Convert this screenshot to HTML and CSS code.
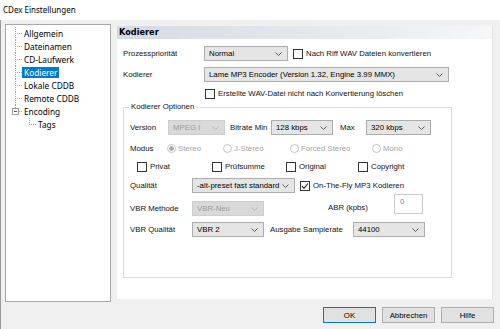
FILE: index.html
```html
<!DOCTYPE html>
<html lang="de">
<head>
  <meta charset="UTF-8" />
  <title>CDex Einstellungen</title>
  <link rel="stylesheet" href="styles.css">
</head>
<body>

<div class="titlebar">CDex Einstellungen</div>

<div class="dialog">
  <div class="main">

    <div class="tree">
      <ul>
        <li><div class="row"><span class="branch"></span><span class="node">Allgemein</span></div></li>
        <li><div class="row"><span class="branch"></span><span class="node">Dateinamen</span></div></li>
        <li><div class="row"><span class="branch"></span><span class="node">CD-Laufwerk</span></div></li>
        <li><div class="row"><span class="branch"></span><span class="node selected">Kodierer</span></div></li>
        <li><div class="row"><span class="branch"></span><span class="node">Lokale CDDB</span></div></li>
        <li><div class="row"><span class="branch"></span><span class="node">Remote CDDB</span></div></li>
        <li class="last">
          <div class="row"><span class="branch"><span class="toggle"></span></span><span class="node">Encoding</span></div>
          <ul class="sub">
            <li class="last"><div class="row"><span class="branch"></span><span class="node">Tags</span></div></li>
          </ul>
        </li>
      </ul>
    </div>

    <div class="page">
      <div class="page-head">Kodierer</div>
      <div class="page-body">

        <div class="line line-prio">
          <span class="lbl lbl-main">Prozesspriorität</span>
          <div class="combo c-prio"><span>Normal</span><svg class="arr" width="7" height="4" viewBox="0 0 7 4"><path d="M0.5 0.5 3.5 3.5 6.5 0.5" /></svg></div>
          <label class="check ml5"><span class="box"></span>Nach Riff WAV Dateien konvertieren</label>
        </div>

        <div class="line line-enc">
          <span class="lbl lbl-main">Kodierer</span>
          <div class="combo c-enc"><span>Lame MP3 Encoder (Version 1.32, Engine 3.99 MMX)</span><svg class="arr" width="7" height="4" viewBox="0 0 7 4"><path d="M0.5 0.5 3.5 3.5 6.5 0.5" /></svg></div>
        </div>

        <div class="line line-keep">
          <label class="check"><span class="box"></span>Erstellte WAV-Datei nicht nach Konvertierung löschen</label>
        </div>

        <fieldset class="group">
          <legend>Kodierer Optionen</legend>

          <div class="line line-version">
            <span class="lbl lbl-version">Version</span>
            <div class="combo disabled c-version"><span>MPEG I</span><svg class="arr" width="7" height="4" viewBox="0 0 7 4"><path d="M0.5 0.5 3.5 3.5 6.5 0.5" /></svg></div>
            <span class="lbl lbl-min">Bitrate Min</span>
            <div class="combo c-min"><span>128 kbps</span><svg class="arr" width="7" height="4" viewBox="0 0 7 4"><path d="M0.5 0.5 3.5 3.5 6.5 0.5" /></svg></div>
            <span class="lbl lbl-max">Max</span>
            <div class="combo c-max"><span>320 kbps</span><svg class="arr" width="7" height="4" viewBox="0 0 7 4"><path d="M0.5 0.5 3.5 3.5 6.5 0.5" /></svg></div>
          </div>

          <div class="line line-mode">
            <span class="lbl lbl-mode">Modus</span>
            <label class="radio r-stereo"><span class="dot checked"></span>Stereo</label>
            <label class="radio r-joint"><span class="dot"></span>J-Stereo</label>
            <label class="radio r-forced"><span class="dot"></span>Forced Stereo</label>
            <label class="radio"><span class="dot"></span>Mono</label>
          </div>

          <div class="line line-flags">
            <label class="check f-privat"><span class="box"></span>Privat</label>
            <label class="check f-crc"><span class="box"></span>Prüfsumme</label>
            <label class="check f-orig"><span class="box"></span>Original</label>
            <label class="check"><span class="box"></span>Copyright</label>
          </div>

          <div class="line line-quality">
            <span class="lbl lbl-opt">Qualität</span>
            <div class="combo c-quality"><span>-alt-preset fast standard</span><svg class="arr" width="7" height="4" viewBox="0 0 7 4"><path d="M0.5 0.5 3.5 3.5 6.5 0.5" /></svg></div>
            <label class="check ml5"><span class="box"><svg width="8" height="8" viewBox="0 0 8 8"><path d="M1 4.2 3 6.3 7 1.5" /></svg></span>On-The-Fly MP3 Kodieren</label>
          </div>

          <div class="line line-vbr">
            <span class="lbl lbl-opt down">VBR Methode</span>
            <div class="combo disabled c-vbr down"><span>VBR-Neu</span><svg class="arr" width="7" height="4" viewBox="0 0 7 4"><path d="M0.5 0.5 3.5 3.5 6.5 0.5" /></svg></div>
            <span class="lbl lbl-abr">ABR (kpbs)</span>
            <div class="edit">0</div>
          </div>

          <div class="line line-vbrq">
            <span class="lbl lbl-opt">VBR Qualität</span>
            <div class="combo c-vbr"><span>VBR 2</span><svg class="arr" width="7" height="4" viewBox="0 0 7 4"><path d="M0.5 0.5 3.5 3.5 6.5 0.5" /></svg></div>
            <span class="lbl lbl-rate">Ausgabe Samplerate</span>
            <div class="combo c-vbr"><span>44100</span><svg class="arr" width="7" height="4" viewBox="0 0 7 4"><path d="M0.5 0.5 3.5 3.5 6.5 0.5" /></svg></div>
          </div>
        </fieldset>

      </div>
    </div>

  </div>

  <div class="buttons">
    <button class="btn default">OK</button>
    <button class="btn">Abbrechen</button>
    <button class="btn">Hilfe</button>
  </div>
</div>

</body>
</html>
```

FILE: styles.css
```css
* {
  box-sizing: border-box;
}

body {
  margin: 0;
  width: 500px;
  height: 329px;
  overflow: hidden;
  background-color: #f0f0f0;
  font-family: "Liberation Sans", Arial, sans-serif;
  font-size: 7.8px;
  color: #111;
}

.titlebar {
  height: 20px;
  padding-left: 3px;
  background: white;
  font-family: "Noto Sans", sans-serif;
  font-size: 8px;
  line-height: 20px;
  color: #000;
}

.dialog {
  height: 309px;
  border-left: 1px solid #9a9a9a;
  padding: 4px 6px 0 4px;
}

.main {
  display: flex;
  gap: 6px;
  height: 278px;
}

/* tree */

.tree {
  width: 106px;
  height: 278px;
  flex: none;
  background: white;
  border: 1px solid #a9a9a9;
  padding-top: 2px;
  font-family: "Noto Sans", sans-serif;
  font-size: 8.3px;
  color: #000;
}

.tree ul {
  list-style: none;
  margin: 0;
  padding: 0 0 0 9px;
}

.tree ul.sub {
  padding-left: 14px;
}

.tree .row {
  display: flex;
  align-items: center;
  height: 13px;
}

.branch {
  display: flex;
  align-items: center;
  width: 7px;
  height: 13px;
  flex: none;
  background:
    repeating-linear-gradient(to bottom, #a0a0a0 0 1px, transparent 1px 2px) 0 0 / 1px 100% no-repeat,
    repeating-linear-gradient(to right, #a0a0a0 0 1px, transparent 1px 2px) 0 6px / 100% 1px no-repeat;
}

.last > .row .branch {
  background-size: 1px 7px, 100% 1px;
}

.toggle {
  width: 7px;
  height: 7px;
  margin-left: -3px;
  margin-top: -1px;
  border: 1px solid #9a9a9a;
  background: linear-gradient(#555, #555) center / 3px 1px no-repeat, white;
}

.node {
  padding: 0 2px;
  line-height: 11px;
  white-space: nowrap;
}

.node.selected {
  background-color: #0078d7;
  color: white;
}

/* page */

.page {
  width: 376px;
  height: 273px;
  margin-top: 2px;
  flex: none;
  background: white;
  border-right: 1px solid #e2e2e2;
}

.page-head {
  height: 13px;
  padding-left: 2px;
  background: linear-gradient(to right, #d3dbe4, #e9edf1 70%, #f6f7f9);
  font-family: "DejaVu Sans", sans-serif;
  font-weight: bold;
  font-size: 8.2px;
  line-height: 13px;
  color: #000;
}

.page-body {
  padding-left: 6px;
}

.line {
  display: flex;
  align-items: center;
  height: 15px;
  white-space: nowrap;
}

.line-prio { margin-top: 7px; }
.line-enc { margin-top: 6px; }
.line-keep { margin-top: 5px; padding-left: 82px; height: 13px; }
.line-version { margin-top: 8px; }
.line-mode { margin-top: 6px; }
.line-flags { margin-top: 3px; padding-left: 7px; }
.line-quality { margin-top: 4px; }
.line-vbr { margin-top: 1px; height: 22px; align-items: flex-start; }
.line-vbrq { margin-top: 6px; }

.lbl {
  flex: none;
  line-height: 15px;
}

.lbl-main { width: 81px; }
.lbl-version { width: 38px; }
.lbl-min { width: 41px; margin-left: 5px; }
.lbl-max { width: 26px; margin-left: 7px; }
.lbl-mode { width: 37px; }
.lbl-opt { width: 62px; }
.lbl-abr { width: 66px; margin-left: 64px; margin-top: 6px; }
.lbl-rate { width: 83px; margin-left: 6px; }

.down { margin-top: 7px; }
.ml5 { margin-left: 5px; }

/* combo boxes */

.combo {
  display: flex;
  align-items: center;
  justify-content: space-between;
  height: 15px;
  flex: none;
  padding: 0 5px 0 4px;
  border: 1px solid #adadad;
  background-color: #e5e5e5;
  color: #000;
}

.combo .arr path {
  fill: none;
  stroke: #5a5a5a;
  stroke-width: 1;
}

.combo.disabled {
  background-color: #d9d9d9;
  border-color: #cdcdcd;
  color: #9d9d9d;
}

.combo.disabled .arr path {
  stroke: #b5b5b5;
}

.c-prio { width: 84px; }
.c-enc { width: 245px; }
.c-version { width: 57px; }
.c-min { width: 62px; }
.c-max { width: 65px; }
.c-quality { width: 103px; }
.c-vbr { width: 72px; }

.edit {
  width: 29px;
  height: 20px;
  flex: none;
  padding: 2px 0 0 5px;
  border: 1px solid #c9c9c9;
  background: white;
  color: #8a8a8a;
}

/* check boxes and radios */

.check, .radio {
  display: flex;
  align-items: center;
  flex: none;
}

.box {
  display: flex;
  align-items: center;
  justify-content: center;
  width: 10px;
  height: 10px;
  margin-right: 3px;
  border: 1px solid #333;
  background: white;
}

.box path {
  fill: none;
  stroke: #222;
  stroke-width: 1.1;
}

.f-privat { width: 75px; }
.f-crc { width: 74px; }
.f-orig { width: 72px; }

.radio {
  color: #a3a3a3;
}

.dot {
  width: 9px;
  height: 9px;
  margin-right: 2px;
  border: 1px solid #c4c4c4;
  border-radius: 50%;
  background: white;
}

.dot.checked {
  background: radial-gradient(circle, #a8a8a8 0 2px, white 2.5px);
}

.r-stereo { width: 56px; }
.r-joint { width: 67px; }
.r-forced { width: 82px; }

/* group */

.group {
  width: 329px;
  margin: 2px 0 0 0;
  padding: 0 0 40px 6px;
  border: 1px solid #dcdcdc;
}

.group legend {
  padding: 0 2px;
  margin-left: -1px;
  line-height: 10px;
}

/* buttons */

.buttons {
  display: flex;
  justify-content: flex-end;
  gap: 6px;
  margin-top: 5px;
}

.btn {
  width: 53px;
  height: 16px;
  padding: 0;
  border: 1px solid #adadad;
  background-color: #e1e1e1;
  font-family: "Liberation Sans", Arial, sans-serif;
  font-size: 7.8px;
  color: #000;
}

.btn.default {
  border-color: #0078d7;
}
```
